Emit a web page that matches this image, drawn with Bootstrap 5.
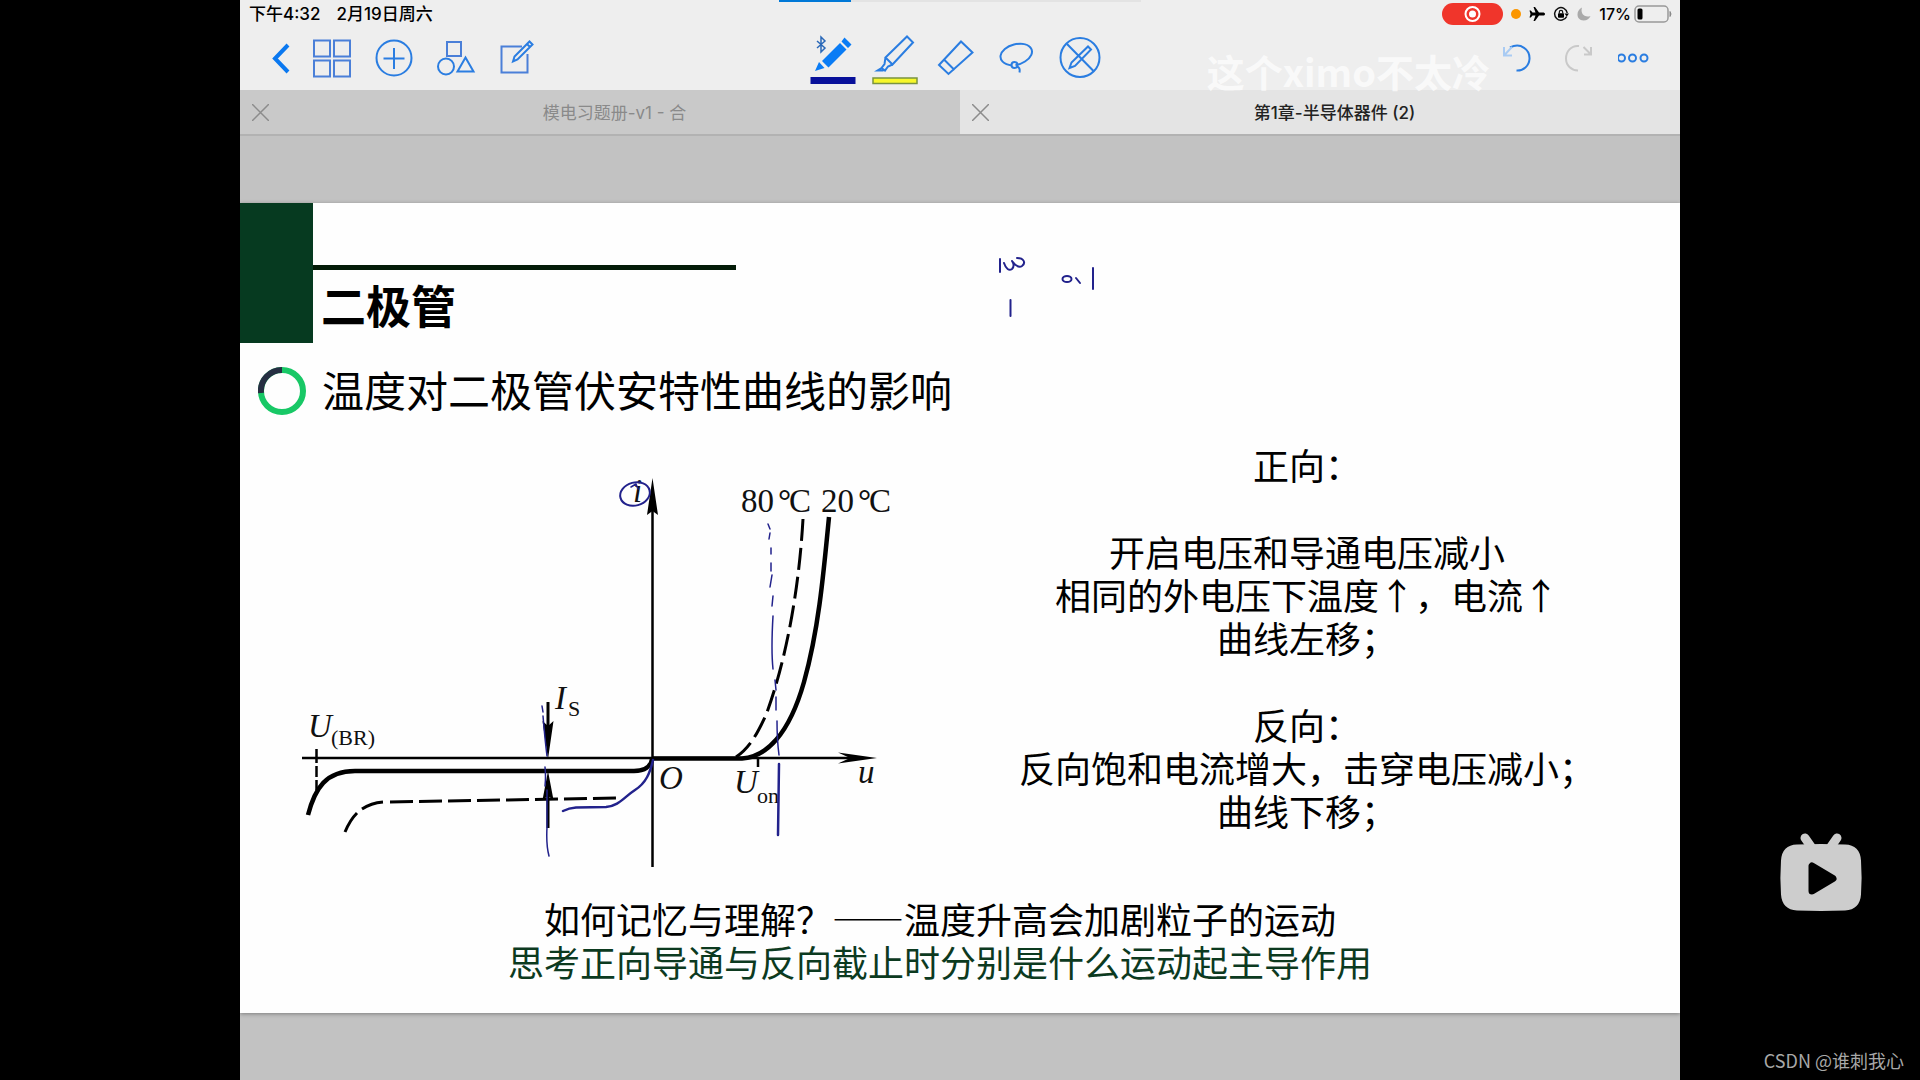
<!DOCTYPE html>
<html lang="zh-CN">
<head>
<meta charset="utf-8">
<meta name="viewport" content="width=device-width, initial-scale=1">
<title>第1章-半导体器件 (2)</title>
<link href="https://cdn.jsdelivr.net/npm/bootstrap@5.3.0/dist/css/bootstrap.min.css" rel="stylesheet">
<style>
  body { background: #000; font-family: "Noto Sans CJK SC", sans-serif; color: #000; }
  svg { display: block; flex: none; }
  .tablet { background: #c2c2c2; }
  .chrome-bar { background: #eee; }
  .status-row { height: 28px; padding: 0 8px 0 9px; font: 500 16px/28px Inter, "Noto Sans CJK SC", sans-serif; }
  .status-row .gap-tight { gap: 3px; }
  .clock { gap: 16px; font-size: 17px; }
  .tool-row { height: 62px; padding: 0 28px 0 29px; }
  .tool-btn { background: none; border: 0; padding: 0; }
  .tool-btn svg { fill: none; stroke: #2a7de1; stroke-width: 2; }
  .tab-item { height: 46px; background: #c9c9c9; border-bottom: 2px solid #b2b2b2; padding-left: 12px; font: 17px/44px Inter, "Noto Sans CJK SC", sans-serif; color: #8a8a8a; }
  .tab-item a { color: inherit; padding-top: 2px; }
  .tab-item.is-open { background: #e4e4e4; color: #222; font-weight: 500; }
  .slide-page { margin-top: 67px; padding-bottom: 30px; background: #fefefe; box-shadow: 0 1px 4px rgba(0,0,0,.35); }
  .green-block { width: 73px; height: 140px; background: #063a20; }
  .head-rule { margin-top: 62px; width: 423px; height: 5px; background: #041c08; }
  .slide-title { margin: 8px 0 0 8px; font-size: 45px; line-height: 54px; font-weight: 700; }
  .sub-row { margin-top: 20px; padding-left: 18px; gap: 16px; }
  .sub-title { padding-bottom: 4px; font-size: 42px; line-height: 52px; font-weight: 400; }
  .slide-main { margin-top: 24px; padding-left: 50px; }
  .curve-plot { margin-top: 17px; font-family: "Liberation Serif", serif; font-size: 33px; fill: #111; }
  .curve-plot .sub { font-size: 22px; }
  .notes { padding-left: 24px; font-size: 36px; line-height: 43px; text-align: center; }
  .notes p { margin-bottom: 44px; }
  .summary { margin-top: 17px; padding-right: 40px; font-size: 36px; line-height: 43px; text-align: center; }
  .summary .think { color: #0c3a1f; }
  .pen-ink { fill: none; stroke: #22228c; stroke-linecap: round; stroke-linejoin: round; }
  .ink-note { left: 750px; top: 47px; }
  .load-strip { left: 539px; top: 0; width: 362px; height: 2px; background: #e3e3e3; }
  .load-strip div { height: 2px; background: #0078d7; }
  .author-mark { right: 190px; top: 43px; font-size: 38px; line-height: 56px; font-weight: 700; color: rgba(255,255,255,.7); }
  .player-logo { right: 56px; top: 830px; }
  .blog-mark { right: 16px; bottom: 6px; font-size: 18px; line-height: 28px; color: #a8a8a8; }
</style>
<script src="https://cdn.jsdelivr.net/npm/bootstrap@5.3.0/dist/js/bootstrap.bundle.min.js"></script>
</head>
<body>
<div class="container-fluid p-0 position-relative">
  <div class="row g-0 justify-content-center">
    <div class="tablet col-9 min-vh-100 position-relative">

      <header class="chrome-bar">
        <div class="status-row d-flex align-items-center justify-content-between">
          <div class="clock d-flex"><span>下午4:32</span><span>2月19日周六</span></div>
          <div class="d-flex align-items-center gap-2">
            <svg width="61" height="22" viewBox="0 0 61 22"><rect width="61" height="22" rx="11" fill="#f0352b"/><circle cx="30.500" cy="11" r="7" fill="none" stroke="#fff" stroke-width="2"/><circle cx="30.500" cy="11" r="3.500" fill="#fff"/></svg>
            <svg width="10" height="10" viewBox="0 0 10 10"><circle cx="5" cy="5" r="5" fill="#fb9600"/></svg>
            <svg width="16" height="16" viewBox="0 0 16 16"><path d="M16 8c0-1-1-1.500-2-1.500h-4L6 1H4.500l2 5.500H3.500L1.800 4.500H.5L1.500 8l-1 3.500h1.300l1.700-2h3L4.500 15H6l4-5.500h4c1 0 2-.5 2-1.500z"/></svg>
            <svg width="16" height="16" viewBox="0 0 16 16"><path d="M13.700 10.500A6.300 6.300 0 1 1 14.200 7" fill="none" stroke="#111" stroke-width="1.500"/><path d="M11.500 7.500h4.500l-2.200 3z"/><rect x="5" y="7.200" width="6" height="4.500" rx=".8"/><path d="M6.300 7.500V6a1.700 1.700 0 0 1 3.400 0v1.500" fill="none" stroke="#111" stroke-width="1.200"/></svg>
            <svg width="14" height="14" viewBox="0 0 14 14"><path d="M5 .5C-1 3-1.500 13 6.500 13.500c3.500 0 6-2 7-4.500C8 11 3 7 5 .5z" fill="#aaa"/></svg>
            <div class="d-flex align-items-center gap-tight"><span>17%</span>
            <svg width="38" height="18" viewBox="0 0 38 18"><rect x="1" y="1" width="33" height="16" rx="4" fill="none" stroke="#999" stroke-width="1.500"/><rect x="3.500" y="3.500" width="5" height="11" rx="1.500"/><path d="M36 6.500q2 2.500 0 5z" fill="#888" stroke="#888"/></svg></div>
          </div>
        </div>

        <nav class="tool-row d-flex align-items-center" aria-label="工具栏">
          <div class="d-flex gap-3 flex-fill w-25">
            <button class="tool-btn" type="button" aria-label="返回"><svg width="24" height="54" viewBox="0 0 24 54"><path d="M19 13L6 26.500 19 40" style="stroke:#0a78f0;stroke-width:4"/></svg></button>
            <button class="tool-btn" type="button" aria-label="缩略图"><svg width="46" height="54" viewBox="0 0 46 54"><path d="M5 8.500h16v16H5zM25 8.500h16v16H25zM5 28.500h16v16H5zM25 28.500h16v16H25z" stroke="#4a7fd8"/></svg></button>
            <button class="tool-btn" type="button" aria-label="添加"><svg width="46" height="54" viewBox="0 0 46 54"><circle cx="23" cy="26" r="17.500"/><path d="M23 16v21M12.500 26.500h21"/></svg></button>
            <button class="tool-btn" type="button" aria-label="形状"><svg width="46" height="54" viewBox="0 0 46 54"><path d="M14 10h14v14H14z" stroke="#4a7fd8"/><circle cx="13" cy="34.500" r="8"/><path d="M32.500 25.500L40.500 39.500h-16z"/></svg></button>
            <button class="tool-btn" type="button" aria-label="编辑"><svg width="46" height="54" viewBox="0 0 46 54"><path d="M27 14.500H6.500v26h26V22" stroke="#4a7fd8"/><path d="M18 29.500l1.500-5L34.500 9.500l3 3L22.500 27.500zM32 12l3 3"/></svg></button>
          </div>
          <div class="d-flex gap-3 me-2">
            <button class="tool-btn" type="button" aria-label="钢笔"><svg width="46" height="54" viewBox="0 0 46 54"><path d="M7 9l8 7-4 4V5l4 4-8 7" stroke-width="1.500" stroke="#2a68b8"/><path d="M12 29L30 11l6.500 6.500-18 18zM31.500 9.500l3-4 7 7-3.500 3.500zM5 39l4-9 5.500 6z" fill="#0a7cf5" stroke="none"/><path d="M.5 45h45v7h-45z" fill="#08109a" stroke="none"/></svg></button>
            <button class="tool-btn" type="button" aria-label="荧光笔"><svg width="46" height="54" viewBox="0 0 46 54"><path d="M13.500 25.500L35 4.500l6 6-20.500 22zM13.500 25.500l-1 6.500-3 4 3.500 2.500 3-4 4.500-2M9.500 36L5.500 38.500h6"/><path d="M1 46h44v5.500H1z" fill="#f7f72a" stroke="#7a9440" stroke-width="1.500"/></svg></button>
            <button class="tool-btn" type="button" aria-label="橡皮"><svg width="46" height="54" viewBox="0 0 46 54"><path d="M5 33L27 9.500 38.500 20.500 14.500 42zM10 27.500L20.500 38"/></svg></button>
            <button class="tool-btn" type="button" aria-label="套索"><svg width="46" height="54" viewBox="0 0 46 54"><path d="M16 33.500C-2 31 3 16 18 12.500c18-4 24 9 11 17-3 2-6 3-9.500 3.500"/><circle cx="18.500" cy="33" r="3"/><path d="M21 34.500q3.500 1 2.500 6"/></svg></button>
            <button class="tool-btn" type="button" aria-label="只读模式"><svg width="46" height="54" viewBox="0 0 46 54"><circle cx="22" cy="25.500" r="19.500"/><path d="M9 12l26.500 27M11.500 36l2-5.500L30 14.500l3 3L17 34z"/></svg></button>
          </div>
          <div class="d-flex gap-3 flex-fill w-25 justify-content-end">
            <button class="tool-btn" type="button" aria-label="撤销"><svg width="46" height="54" viewBox="0 0 46 54"><path d="M16 15.500C27 10 36 18 35.500 27c-.5 7-6 12-13 11.500"/><path d="M10 15v8.500h8M10.500 23L18 15" stroke="#a9cbf3"/></svg></button>
            <button class="tool-btn" type="button" aria-label="重做"><svg width="46" height="54" viewBox="0 0 46 54"><path d="M23 14C15 13 10 20 10 26.500c0 7 5 11.500 12 12M27.500 15l7 7M35 15v7.500h-7" stroke="#c9c9c9"/></svg></button>
            <button class="tool-btn" type="button" aria-label="更多"><svg width="34" height="54" viewBox="0 0 34 54"><circle cx="3.500" cy="26" r="3.500"/><circle cx="14.500" cy="26" r="3.500"/><circle cx="26" cy="26" r="3.500"/></svg></button>
          </div>
        </nav>

        <div class="d-flex">
          <div class="tab-item d-flex align-items-center w-50">
            <button class="tool-btn" type="button" aria-label="关闭 模电习题册"><svg width="17" height="17" viewBox="0 0 17 17"><path d="M0 0l17 17M17 0L0 17" style="stroke:#8c8c8c;stroke-width:1.500"/></svg></button>
            <a href="#" class="flex-fill text-center text-decoration-none">模电习题册-v1 - 合</a>
          </div>
          <div class="tab-item is-open d-flex align-items-center w-50">
            <button class="tool-btn" type="button" aria-label="关闭 第1章"><svg width="17" height="17" viewBox="0 0 17 17"><path d="M0 0l17 17M17 0L0 17" style="stroke:#8c8c8c;stroke-width:1.500"/></svg></button>
            <a href="#" class="flex-fill text-center text-decoration-none">第1章-半导体器件 (2)</a>
          </div>
        </div>
      </header>
      <div class="load-strip position-absolute"><div style="width:20%"></div></div>
      <div class="author-mark position-absolute">这个ximo不太冷</div>

      <main class="slide-page position-relative">
        <div class="d-flex">
          <div class="green-block"></div>
          <div>
            <div class="head-rule"></div>
            <h1 class="slide-title">二极管</h1>
          </div>
        </div>

        <div class="sub-row d-flex align-items-center">
          <svg width="48" height="48" viewBox="0 0 48 48" fill="none" stroke-width="6"><circle cx="24" cy="24" r="21" stroke="#18c866"/><path d="M3 26A21 21 0 0 1 24 3" stroke="#262f42"/></svg>
          <h2 class="sub-title m-0">温度对二极管伏安特性曲线的影响</h2>
        </div>

        <div class="slide-main d-flex align-items-start">
          <svg class="curve-plot" width="620" height="420" viewBox="290 460 620 420" role="img" aria-label="二极管伏安特性曲线">
            <g fill="none" stroke="#000">
              <path d="M302 758H860M652.500 500V867" stroke-width="2.500"/>
              <path d="M308 815C315 788 326 771 355 771H634C645 771 651 766 652 759" stroke-width="4.500"/>
              <path d="M652 758.500H742C766 757 789 735 804 682C818 632 823 580 829 517" stroke-width="4.500"/>
              <path d="M803 519C799 590 786 661 766 715C758 732 750 748 736 757" stroke-width="3" stroke-dasharray="22 7"/>
              <path d="M345 832Q350 820 357 813M362 809Q371 803 383 802" stroke-width="3"/>
              <path d="M390 802L620 798" stroke-width="3" stroke-dasharray="23 6"/>
              <path d="M316.500 749V763M316.500 766V777M316.500 780V790M758 758V767" stroke-width="2.500"/>
              <path d="M548 702V740M548 790V828" stroke-width="3"/>
            </g>
            <path d="M652.500 478L658 515 652.500 511 647 515zM877 758L838 763.500 850 758 838 752.500zM548 759L542.500 721 548 726 553.500 721zM548 771L553.500 800 548 796 542.500 800z" fill="#000"/>
            <text x="308" y="737" font-style="italic">U</text><text class="sub" x="331" y="745">(BR)</text>
            <text x="555" y="709" font-style="italic">I</text><text class="sub" x="568" y="716">S</text>
            <text x="659" y="789" font-style="italic">O</text>
            <text x="734" y="793" font-style="italic">U</text><text class="sub" x="757" y="803">on</text>
            <text x="858" y="783" font-style="italic">u</text>
            <text x="633" y="502" font-style="italic">i</text>
            <text y="512"><tspan x="741">80</tspan><tspan x="778" font-weight="700">°</tspan><tspan x="789">C</tspan><tspan x="821">20</tspan><tspan x="858" font-weight="700">°</tspan><tspan x="869">C</tspan></text>
            <g class="pen-ink" stroke-width="1.500">
              <ellipse cx="635" cy="494" rx="15" ry="11.500" transform="rotate(-15 635 494)" stroke-width="2"/>
              <path d="M631 487l5-3 2 5"/>
              <path d="M542 706l1 6M543 716q2 24 4 40M545 767q1 10 0 19M547 790V827Q546 845 549 856"/>
              <path d="M563 811Q569 808 576 807.500L606 807C619 806 624 797 635 790S650 773 653 760" stroke-width="2.500"/>
              <path d="M768 524l2 5M770 533l-1 6M771 548v6M771 563v8M772 575l-2 12M773 596l-1 10M773 616Q771 650 773 669M775 680l1 10M776 697v13M777 721Q777 740 779 755"/>
              <path d="M779 764L778 835" stroke-width="2.500"/>
            </g>
          </svg>
          <div class="notes flex-fill">
            <p>正向：</p>
            <p>开启电压和导通电压减小<br>相同的外电压下温度↑，电流↑<br>曲线左移；</p>
            <p class="mb-0">反向：<br>反向饱和电流增大，击穿电压减小；<br>曲线下移；</p>
          </div>
        </div>

        <div class="summary">
          <div>如何记忆与理解？——温度升高会加剧粒子的运动</div>
          <div class="think">思考正向导通与反向截止时分别是什么运动起主导作用</div>
        </div>

        <svg class="ink-note pen-ink position-absolute" width="110" height="75" viewBox="990 250 110 75" stroke-width="2">
          <path d="M1000 259v13M1004 263c2 6 5 8 8 6 3-3 1-7 0-8 3 4 7 7 10 5 4-3 2-8-5-8M1010.500 300v16"/>
          <ellipse cx="1067" cy="279" rx="4.500" ry="3"/><path d="M1076 278l4 5M1093 268v21"/>
        </svg>
      </main>
    </div>
  </div>

  <svg class="player-logo position-absolute" width="86" height="84" viewBox="1778 830 86 84" role="img" aria-label="播放"><path d="M1805 838l7 10M1837 838l-7 10" stroke="#cdcdcd" stroke-width="9" stroke-linecap="round"/><path d="M1797 844.500q24-1 48 0 15 .5 16 16 1.200 17 0 34-1 15-16 16-24 .8-48 0-15-1-16-16-1.200-17 0-34 1-15.500 16-16z" fill="#cdcdcd"/><path d="M1812 866v25l21-12.500z" stroke="#000" stroke-width="7" stroke-linejoin="round"/></svg>
  <div class="blog-mark position-absolute">CSDN @谁刺我心</div>
</div>
</body>
</html>
